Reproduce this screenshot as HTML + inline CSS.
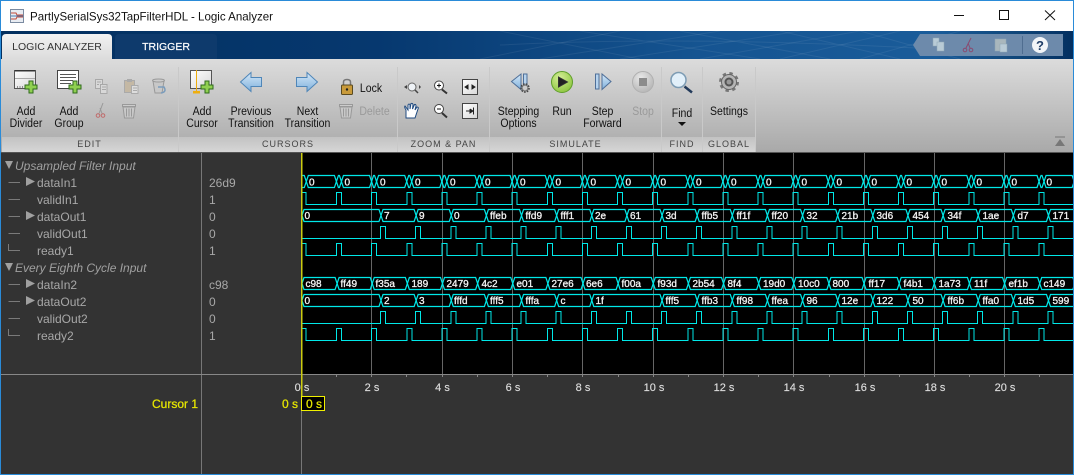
<!DOCTYPE html>
<html><head><meta charset="utf-8"><title>PartlySerialSys32TapFilterHDL - Logic Analyzer</title>
<style>
html,body{margin:0;padding:0;background:#333;width:1074px;height:475px;overflow:hidden}
svg{display:block;font-family:"Liberation Sans",Arial,sans-serif}
.b{font-size:12px;fill:#111;text-anchor:middle;transform-box:fill-box;transform-origin:center;transform:scaleX(.875)}
.g{fill:#9a9a9a}
.s{font-size:9px;fill:#444;letter-spacing:1px;text-anchor:middle}
.n{font-size:12px;fill:#a8a8a8}
.i{font-size:12px;fill:#a0a0a0;font-style:italic}
.w{fill:none;stroke:#00e8e8;stroke-width:1.2}
.p{fill:none;stroke:#00e8e8;stroke-width:1;shape-rendering:crispEdges}
.v{font-size:10px;fill:#f5f5f5;stroke:#f5f5f5;stroke-width:.3}
.t{font-size:11px;fill:#ddd;text-anchor:middle;stroke:#ddd;stroke-width:.15}
.y{font-size:12px;fill:#e6e600;stroke:#e6e600;stroke-width:.25}
</style></head><body>
<svg width="1074" height="475" viewBox="0 0 1074 475" xmlns="http://www.w3.org/2000/svg">
<defs>
<linearGradient id="hd" x1="0" x2="1" y1="0" y2="0"><stop offset="0" stop-color="#03305f"/><stop offset=".35" stop-color="#06386f"/><stop offset=".65" stop-color="#155491"/><stop offset=".87" stop-color="#1a5c9a"/><stop offset=".95" stop-color="#0f4578"/><stop offset="1" stop-color="#032f60"/></linearGradient>
<linearGradient id="rb" x1="0" x2="0" y1="0" y2="1"><stop offset="0" stop-color="#dcdcdc"/><stop offset="1" stop-color="#a9a9a9"/></linearGradient>
<linearGradient id="st" x1="0" x2="0" y1="0" y2="1"><stop offset="0" stop-color="#c2c2c2"/><stop offset="1" stop-color="#d6d6d6"/></linearGradient>
<linearGradient id="tb" x1="0" x2="0" y1="0" y2="1"><stop offset="0" stop-color="#f2f2f2"/><stop offset="1" stop-color="#dcdcdc"/></linearGradient>
<linearGradient id="ar" x1="0" x2="0" y1="0" y2="1"><stop offset="0" stop-color="#d5e8f8"/><stop offset="1" stop-color="#7fb0dc"/></linearGradient>
<radialGradient id="gr" cx=".4" cy=".3" r=".8"><stop offset="0" stop-color="#d5ee96"/><stop offset="1" stop-color="#86c238"/></radialGradient>
<radialGradient id="gy" cx=".4" cy=".3" r=".8"><stop offset="0" stop-color="#e8e8e8"/><stop offset="1" stop-color="#b0b0b0"/></radialGradient>
<linearGradient id="bx" x1="0" x2="1" y1="0" y2="1"><stop offset="0" stop-color="#fff"/><stop offset="1" stop-color="#d8d8d8"/></linearGradient>
</defs>

<!-- window -->
<rect width="1074" height="475" fill="#333"/>
<rect x="0" y="0" width="1074" height="31" fill="#fff"/>
<rect x="0" y="31" width="1074" height="28" fill="url(#hd)"/>
<g stroke="#fff" stroke-opacity=".07" fill="none">
<path d="M480 59L620 31M540 59L720 31M620 59L800 31M700 59L860 31M780 59L900 31M860 59L960 31"/>
<path d="M500 31L640 59M580 31L760 59M680 31L830 59M780 31L900 59M860 31L960 59M500 45Q700 35 950 50"/>
</g>
<rect x="0" y="59" width="1074" height="93" fill="url(#rb)"/>
<rect x="0" y="152" width="1074" height="1" fill="#555"/>
<text x="30" y="20.5" font-size="12" fill="#111" textLength="243" lengthAdjust="spacingAndGlyphs">PartlySerialSys32TapFilterHDL - Logic Analyzer</text>
<!-- title icon -->
<rect x="10.5" y="9.5" width="13" height="13" fill="#e8ecf2" stroke="#7a8aa0"/>
<path d="M11 13H16L18 17H23M11 19H16L18 15H23" fill="none" stroke="#c04a3a" stroke-width="1"/>
<path d="M11 16H23" stroke="#4a7ab0"/>
<!-- window buttons -->
<path d="M954 15.5H964" stroke="#111"/>
<rect x="999.5" y="10.5" width="9" height="9" fill="none" stroke="#111"/>
<path d="M1045 10.5L1055 20M1055 10.5L1045 20" stroke="#111" fill="none"/>
<!-- tabs -->
<path d="M2 59V38Q2 34 6 34H108Q112 34 112 38V59Z" fill="url(#tb)"/>
<text x="57" y="50" text-anchor="middle" font-size="10.5" fill="#333">LOGIC ANALYZER</text>
<path d="M115 59V38Q115 34 119 34H213Q217 34 217 38V59Z" fill="#0e3a6c"/>
<text x="166" y="50" text-anchor="middle" font-size="10.5" fill="#fff" stroke="#fff" stroke-width=".2">TRIGGER</text>
<!-- quick access -->
<path d="M913 45L920 34H1063V56H920Z" fill="#6d8aab"/>
<path d="M1022.5 36V54" stroke="#4f6d90"/>
<g fill="#b9cbd6" stroke="#8fa6b4" stroke-width=".5"><rect x="933" y="38" width="6" height="8"/><rect x="937" y="42" width="7" height="9"/></g>
<g fill="none" stroke="#8a4a70"><circle cx="965" cy="50" r="1.8"/><circle cx="971" cy="50" r="1.8"/><path d="M966 48L971 38M970 48L968 43"/></g>
<g fill="#b9cbd6" stroke="#8fa6b4" stroke-width=".5"><rect x="995" y="39" width="11" height="12" fill="#a9b7bd"/><rect x="1000" y="44" width="7" height="8"/></g>
<circle cx="1040" cy="45" r="8" fill="#f2f5f8"/>
<text x="1040" y="50" text-anchor="middle" font-size="13" font-weight="bold" fill="#1f3e68">?</text>
<!-- section strips -->
<rect x="2" y="137" width="753" height="15" fill="url(#st)"/>
<g stroke="#c9c9c9" fill="none"><path d="M178.5 67V152M397.5 67V152M489.5 67V152M661.5 67V152M702.5 67V152M755.5 67V152"/></g>
<text class="s" x="89.500" y="147">EDIT</text>
<text class="s" x="288" y="147">CURSORS</text>
<text class="s" x="443.500" y="147">ZOOM &amp; PAN</text>
<text class="s" x="575.500" y="147">SIMULATE</text>
<text class="s" x="682" y="147">FIND</text>
<text class="s" x="729" y="147">GLOBAL</text>
<!-- collapse -->
<path d="M1055 137H1065" stroke="#777"/><path d="M1055 146L1060 139L1065 146Z" fill="#777"/>

<!-- button labels -->
<text class="b" x="26" y="115">Add</text><text class="b" x="26" y="127">Divider</text>
<text class="b" x="69" y="115">Add</text><text class="b" x="69" y="127">Group</text>
<text class="b" x="202" y="115">Add</text><text class="b" x="202" y="127">Cursor</text>
<text class="b" x="251" y="115">Previous</text><text class="b" x="251" y="127">Transition</text>
<text class="b" x="307.500" y="115">Next</text><text class="b" x="307.500" y="127">Transition</text>
<text class="b" x="371" y="92">Lock</text><text class="b g" x="374.500" y="115">Delete</text>
<text class="b" x="518.500" y="115">Stepping</text><text class="b" x="518.500" y="127">Options</text>
<text class="b" x="562" y="115">Run</text>
<text class="b" x="602.500" y="115">Step</text><text class="b" x="602.500" y="127">Forward</text>
<text class="b g" x="643" y="115">Stop</text>
<text class="b" x="682" y="117">Find</text>
<text class="b" x="729" y="115">Settings</text>
<path d="M678 122H686L682 126Z" fill="#111"/>

<!-- Add Divider -->
<rect x="14.500" y="70.500" width="21" height="18" fill="url(#bx)" stroke="#555"/>
<path d="M15 78.500H35" stroke="#aaa"/><rect x="15" y="70" width="20" height="1.500" fill="#333"/>
<path d="M17 87H28" stroke="#333" stroke-dasharray="1 1.500"/>
<path d="M29 81h4v4h4v4h-4v4h-4v-4h-4v-4h4z" fill="#8fd050" stroke="#2f6a1c"/>
<!-- Add Group -->
<rect x="57.500" y="70.500" width="21" height="18" fill="#fff" stroke="#444"/>
<path d="M60 74.500H76M60 77.500H76M60 80.500H73M60 83.500H71" stroke="#555"/>
<path d="M73 81h4v4h4v4h-4v4h-4v-4h-4v-4h4z" fill="#8fd050" stroke="#2f6a1c"/>
<!-- copy -->
<g fill="#d8d8d8" stroke="#a8a8a8"><rect x="95.500" y="79.500" width="7" height="9"/><rect x="100.500" y="84.500" width="6.500" height="9"/></g>
<path d="M97 82H101M97 84.500H99M102 87H106M102 89.500H106" stroke="#a8a8a8"/>
<!-- paste -->
<rect x="124.500" y="80.500" width="10" height="12" fill="#c4b8a4" stroke="#aaa"/><rect x="127" y="79" width="5" height="3" fill="#aaa"/><rect x="131.500" y="85.500" width="6.500" height="8" fill="#ddd" stroke="#aaa"/>
<path d="M133 88H137M133 90.500H137" stroke="#aaa"/>
<!-- undo -->
<path d="M153 81H164L162 93H155Z" fill="#c8c8c8" stroke="#999"/><ellipse cx="158.500" cy="80.500" rx="6" ry="1.500" fill="#ccc" stroke="#999"/>
<path d="M158 87H164Q167 92 161 93" fill="none" stroke="#7a9cbc" stroke-width="1.500"/>
<!-- scissors -->
<g fill="none" stroke="#c06a6a"><circle cx="98" cy="115.500" r="1.800"/><circle cx="103" cy="115.500" r="1.800"/><path d="M99 113.500L103 103" stroke="#999"/><path d="M102 113.500L100 108" stroke="#999"/></g>
<!-- trash -->
<path d="M123 107H135L133.500 118H124.500Z" fill="#c8c8c8" stroke="#999"/><rect x="122.500" y="104.500" width="13" height="2" fill="#ccc" stroke="#999"/><path d="M126.500 108.500V116.500M129 108.500V116.500M131.500 108.500V116.500" stroke="#999"/>
<path d="M340 107H352L350.500 118H341.500Z" fill="#c8c8c8" stroke="#999"/><rect x="339.500" y="104.500" width="13" height="2" fill="#ccc" stroke="#999"/><path d="M343.500 108.500V116.500M346 108.500V116.500M348.500 108.500V116.500" stroke="#999"/>
<!-- Add Cursor -->
<rect x="190.500" y="70.500" width="21" height="18" fill="url(#bx)" stroke="#555"/>
<path d="M196.500 70V92" stroke="#eeae10"/><rect x="193" y="91" width="7" height="2.500" fill="#eeae10"/>
<path d="M205 81h4v4h4v4h-4v4h-4v-4h-4v-4h4z" fill="#8fd050" stroke="#2f6a1c"/>
<!-- Prev / Next -->
<path d="M240.500 82L251 72.500V77.500H261.500V86.500H251V91.500Z" fill="url(#ar)" stroke="#4f86b8"/>
<path d="M317.500 82L307 72.500V77.500H296.500V86.500H307V91.500Z" fill="url(#ar)" stroke="#4f86b8"/>
<!-- Lock -->
<path d="M343.500 85V82Q343.500 79.500 347 79.500Q350.500 79.500 350.500 82V85" fill="none" stroke="#777" stroke-width="1.500"/>
<rect x="341.500" y="85" width="11" height="9.500" rx="1" fill="#c89a3a" stroke="#5a4a20"/><circle cx="347" cy="89.500" r="1.200" fill="#222"/>
<!-- zoom pan -->
<circle cx="412" cy="87" r="4" fill="#eef2f6" stroke="#666"/><path d="M415 90L418 93" stroke="#444" stroke-width="1.500"/><path d="M404 87L407 85V89ZM421 87L419 85V89Z" fill="#444"/>
<circle cx="439" cy="85.500" r="4.500" fill="#fff" stroke="#444"/><path d="M442 89.500L447 93.500" stroke="#333" stroke-width="2"/><path d="M437 85.500H441M439 83.500V87.500" stroke="#111"/>
<circle cx="439" cy="109" r="4.500" fill="#fff" stroke="#444"/><path d="M442 113L447 117.500" stroke="#333" stroke-width="2"/><path d="M437 109H441" stroke="#111"/>
<rect x="462.500" y="79.500" width="15" height="15" fill="url(#bx)" stroke="#444"/><path d="M465 87L468 85V89ZM475 87L472 85V89Z" fill="#222" stroke="#222"/>
<rect x="462.500" y="103.500" width="15" height="15" fill="url(#bx)" stroke="#444"/><path d="M466 111H470M470 109V113L473 111L470 109M473.500 107.500V114.500" fill="#222" stroke="#222"/>
<path d="M406 118V110Q404 107 405 106L408 110V105Q409 103 410 105V109L411 103.500Q412.500 103 413 104.500L412.500 109L414.500 104.500Q416 104 416 106L415 110L417 107Q419 107 418 109L415 118Z" fill="#fff" stroke="#1f4a80" stroke-width="1"/>
<!-- stepping options -->
<path d="M511.500 81.500L521 74V89.500Z" fill="url(#ar)" stroke="#4f6f98"/><rect x="523.500" y="74" width="3.500" height="11" fill="#b6d3ee" stroke="#4f6f98"/>
<circle cx="525" cy="88" r="3.600" fill="none" stroke="#444" stroke-width="2.400" stroke-dasharray="1.500 1"/><circle cx="525" cy="88" r="3" fill="none" stroke="#777"/>
<!-- run -->
<circle cx="562" cy="82" r="10.500" fill="url(#gr)" stroke="#5f9e2a"/><path d="M558.500 77L567.500 82L558.500 87Z" fill="#222" stroke="#333"/>
<!-- step forward -->
<rect x="595.500" y="74" width="3.500" height="15" fill="#b6d3ee" stroke="#4f6f98"/><path d="M602 74V89.500L611 81.500Z" fill="url(#ar)" stroke="#4f6f98"/>
<!-- stop -->
<circle cx="643" cy="82" r="10.500" fill="url(#gy)" stroke="#b0b0b0"/><rect x="639" y="78" width="8" height="8" fill="#8c8c8c"/>
<!-- find -->
<circle cx="678.500" cy="80" r="7.500" fill="#e2f0fa" stroke="#7d9cb4" stroke-width="1.500"/><path d="M684.500 86.500L692 92.500" stroke="#223a5a" stroke-width="2.500"/>
<!-- settings -->
<circle cx="729" cy="82" r="8.500" fill="none" stroke="#777" stroke-width="3" stroke-dasharray="3.300 3.400"/>
<circle cx="729" cy="82" r="7.500" fill="#b5b5b5" stroke="#666"/><circle cx="729" cy="82" r="4.500" fill="#555"/><circle cx="729" cy="82" r="2.500" fill="#999"/>

<!-- left panel -->
<rect x="0" y="153" width="1074" height="322" fill="#333"/>
<rect x="302" y="153" width="772" height="221" fill="#000"/>
<g stroke="#666" fill="none"><path d="M371.500 153V374M442.500 153V374M512.500 153V374M582.500 153V374M653.500 153V374M723.500 153V374M793.500 153V374M864.500 153V374M934.500 153V374M1004.500 153V374"/></g>
<path d="M201.500 153V474M301.500 374V474" stroke="#777"/>
<path d="M1 374.500H1073" stroke="#888"/>
<path d="M336.500 374V377M371.500 374V377M406.500 374V377M442.500 374V377M477.500 374V377M512.500 374V377M547.500 374V377M582.500 374V377M618.500 374V377M653.500 374V377M688.500 374V377M723.500 374V377M758.500 374V377M793.500 374V377M829.500 374V377M864.500 374V377M899.500 374V377M934.500 374V377M969.500 374V377M1004.500 374V377M1039.500 374V377" stroke="#888"/>

<!-- tree -->
<path d="M8.500 182.500H20M8.500 199.500H20M8.500 216.500H20M8.500 233.500H20M8.500 244V250.500H20M8.500 284.500H20M8.500 301.500H20M8.500 318.500H20M8.500 329V335.500H20" fill="none" stroke="#7a7a7a"/>
<path d="M5 161H13L9 169ZM5 263H13L9 271Z" fill="#a0a0a0"/>
<path d="M26 177L35 181.500L26 186ZM26 211L35 215.500L26 220ZM26 279L35 283.500L26 288ZM26 296L35 300.500L26 305Z" fill="#a0a0a0"/>
<text class="i" x="15" y="170">Upsampled Filter Input</text>
<text class="n" x="37" y="187">dataIn1</text><text class="n" x="209" y="187">26d9</text>
<text class="n" x="37" y="204">validIn1</text><text class="n" x="209" y="204">1</text>
<text class="n" x="37" y="221">dataOut1</text><text class="n" x="209" y="221">0</text>
<text class="n" x="37" y="238">validOut1</text><text class="n" x="209" y="238">0</text>
<text class="n" x="37" y="255">ready1</text><text class="n" x="209" y="255">1</text>
<text class="i" x="15" y="272">Every Eighth Cycle Input</text>
<text class="n" x="37" y="289">dataIn2</text><text class="n" x="209" y="289">c98</text>
<text class="n" x="37" y="306">dataOut2</text><text class="n" x="209" y="306">0</text>
<text class="n" x="37" y="323">validOut2</text><text class="n" x="209" y="323">0</text>
<text class="n" x="37" y="340">ready2</text><text class="n" x="209" y="340">1</text>

<!-- dataIn1 -->
<path class="w" d="M302 175.500h2.300l4 12h26.130l4-12h1l4 12h26.130l4-12h1l4 12h26.130l4-12h1l4 12h26.130l4-12h1l4 12h26.130l4-12h1l4 12h26.130l4-12h1l4 12h26.130l4-12h1l4 12h26.130l4-12h1l4 12h26.130l4-12h1l4 12h26.130l4-12h1l4 12h26.130l4-12h1l4 12h26.130l4-12h1l4 12h26.130l4-12h1l4 12h26.130l4-12h1l4 12h26.130l4-12h1l4 12h26.130l4-12h1l4 12h26.130l4-12h1l4 12h26.130l4-12h1l4 12h26.130l4-12h1l4 12h26.130l4-12h1l4 12h26.130l4-12h1l4 12h26.130l4-12h1l4 12"/>
<path class="w" d="M302 187.500h2.300l4-12h26.130l4 12h1l4-12h26.130l4 12h1l4-12h26.130l4 12h1l4-12h26.130l4 12h1l4-12h26.130l4 12h1l4-12h26.130l4 12h1l4-12h26.130l4 12h1l4-12h26.130l4 12h1l4-12h26.130l4 12h1l4-12h26.130l4 12h1l4-12h26.130l4 12h1l4-12h26.130l4 12h1l4-12h26.130l4 12h1l4-12h26.130l4 12h1l4-12h26.130l4 12h1l4-12h26.130l4 12h1l4-12h26.130l4 12h1l4-12h26.130l4 12h1l4-12h26.130l4 12h1l4-12h26.130l4 12h1l4-12h26.130l4 12h1l4-12h26.130l4 12h1l4-12"/>
<g class="v">
<text x="309" y="185.500">0</text><text x="344.500" y="185.500">0</text><text x="380" y="185.500">0</text><text x="415" y="185.500">0</text><text x="450" y="185.500">0</text><text x="485" y="185.500">0</text><text x="520" y="185.500">0</text><text x="555.500" y="185.500">0</text><text x="590.500" y="185.500">0</text><text x="625.500" y="185.500">0</text><text x="660.500" y="185.500">0</text><text x="696" y="185.500">0</text><text x="731" y="185.500">0</text><text x="766" y="185.500">0</text><text x="801.500" y="185.500">0</text><text x="836.500" y="185.500">0</text><text x="871.500" y="185.500">0</text><text x="906.500" y="185.500">0</text><text x="941.500" y="185.500">0</text><text x="976.500" y="185.500">0</text><text x="1011.500" y="185.500">0</text><text x="1046.500" y="185.500">0</text>
</g>

<!-- pulses validIn1 / ready1 / ready2 -->
<path class="p" d="M302 192.500h3.800v12h30.700v-12h5v12h30.130v-12h5v12h30.130v-12h5v12h30.130v-12h5v12h30.130v-12h5v12h30.130v-12h5v12h30.130v-12h5v12h30.130v-12h5v12h30.130v-12h5v12h30.130v-12h5v12h30.130v-12h5v12h30.130v-12h5v12h30.130v-12h5v12h30.130v-12h5v12h30.130v-12h5v12h30.130v-12h5v12h30.130v-12h5v12h30.130v-12h5v12h30.130v-12h5v12h30.130v-12h5v12h30.130v-12h5v12h30.130"/>
<path class="p" d="M302 243.500h3.800v12h30.700v-12h5v12h30.130v-12h5v12h30.130v-12h5v12h30.130v-12h5v12h30.130v-12h5v12h30.130v-12h5v12h30.130v-12h5v12h30.130v-12h5v12h30.130v-12h5v12h30.130v-12h5v12h30.130v-12h5v12h30.130v-12h5v12h30.130v-12h5v12h30.130v-12h5v12h30.130v-12h5v12h30.130v-12h5v12h30.130v-12h5v12h30.130v-12h5v12h30.130v-12h5v12h30.130v-12h5v12h30.130v-12h5v12h30.130"/>
<path class="p" d="M302 328.500h3.800v12h30.700v-12h5v12h30.130v-12h5v12h30.130v-12h5v12h30.130v-12h5v12h30.130v-12h5v12h30.130v-12h5v12h30.130v-12h5v12h30.130v-12h5v12h30.130v-12h5v12h30.130v-12h5v12h30.130v-12h5v12h30.130v-12h5v12h30.130v-12h5v12h30.130v-12h5v12h30.130v-12h5v12h30.130v-12h5v12h30.130v-12h5v12h30.130v-12h5v12h30.130v-12h5v12h30.130v-12h5v12h30.130v-12h5v12h30.130"/>
<!-- validOut -->
<path class="p" d="M302 238.500H380.500v-12h5v12h30.130v-12h5v12h30.130v-12h5v12h30.130v-12h5v12h30.130v-12h5v12h30.130v-12h5v12h30.130v-12h5v12h30.130v-12h5v12h30.130v-12h5v12h30.130v-12h5v12h30.130v-12h5v12h30.130v-12h5v12h30.130v-12h5v12h30.130v-12h5v12h30.130v-12h5v12h30.130v-12h5v12h30.130v-12h5v12h30.130v-12h5v12h30.130v-12h5v12h30.130v-12h5v12h30.130v-12h5v12h30.130v-12h5v12h30.130"/>
<path class="p" d="M302 323.500H380.500v-12h5v12h30.130v-12h5v12h30.130v-12h5v12h30.130v-12h5v12h30.130v-12h5v12h30.130v-12h5v12h30.130v-12h5v12h30.130v-12h5v12h30.130v-12h5v12h30.130v-12h5v12h30.130v-12h5v12h30.130v-12h5v12h30.130v-12h5v12h30.130v-12h5v12h30.130v-12h5v12h30.130v-12h5v12h30.130v-12h5v12h30.130v-12h5v12h30.130v-12h5v12h30.130v-12h5v12h30.130v-12h5v12h30.130"/>

<!-- dataOut1 -->
<path class="w" d="M302 215.500l2-6h75l4 12h31.130l4-12h31.130l4 12h31.130l4-12h31.130l4 12h31.130l4-12h31.130l4 12h31.130l4-12h31.130l4 12h31.130l4-12h31.130l4 12h31.130l4-12h31.130l4 12h31.130l4-12h31.130l4 12h31.130l4-12h31.130l4 12h31.130l4-12h31.130l4 12h31.130l4-12h31.130l4 12h31.130l4-12h31.130l4 12h31.130l4-12"/>
<path class="w" d="M302 215.500l2 6h75l4-12h31.130l4 12h31.130l4-12h31.130l4 12h31.130l4-12h31.130l4 12h31.130l4-12h31.130l4 12h31.130l4-12h31.130l4 12h31.130l4-12h31.130l4 12h31.130l4-12h31.130l4 12h31.130l4-12h31.130l4 12h31.130l4-12h31.130l4 12h31.130l4-12h31.130l4 12h31.130l4-12h31.130l4 12h31.130l4-12h31.130l4 12"/>
<g class="v">
<text x="304.500" y="219">0</text><text x="384" y="219">7</text><text x="419" y="219">9</text><text x="454" y="219">0</text><text x="490" y="219">ffeb</text><text x="525.500" y="219">ffd9</text><text x="560.500" y="219">fff1</text><text x="595" y="219">2e</text><text x="630" y="219">61</text><text x="665.500" y="219">3d</text><text x="701.500" y="219">ffb5</text><text x="736.500" y="219">ff1f</text><text x="771.500" y="219">ff20</text><text x="806.500" y="219">32</text><text x="841.500" y="219">21b</text><text x="876.500" y="219">3d6</text><text x="912.500" y="219">454</text><text x="947.500" y="219">34f</text><text x="982.500" y="219">1ae</text><text x="1017.500" y="219">d7</text><text x="1052.500" y="219">171</text>
</g>

<!-- dataIn2 -->
<path class="w" d="M302 283.500l2-6h31.100l4 12h31.130l4-12h31.130l4 12h31.130l4-12h31.130l4 12h31.130l4-12h31.130l4 12h31.130l4-12h31.130l4 12h31.130l4-12h31.130l4 12h31.130l4-12h31.130l4 12h31.130l4-12h31.130l4 12h31.130l4-12h31.130l4 12h31.130l4-12h31.130l4 12h31.130l4-12h31.130l4 12h31.130l4-12h31.130l4 12h31.130l4-12"/>
<path class="w" d="M302 283.500l2 6h31.100l4-12h31.130l4 12h31.130l4-12h31.130l4 12h31.130l4-12h31.130l4 12h31.130l4-12h31.130l4 12h31.130l4-12h31.130l4 12h31.130l4-12h31.130l4 12h31.130l4-12h31.130l4 12h31.130l4-12h31.130l4 12h31.130l4-12h31.130l4 12h31.130l4-12h31.130l4 12h31.130l4-12h31.130l4 12h31.130l4-12h31.130l4 12"/>
<g class="v">
<text x="305.500" y="287">c98</text><text x="340.500" y="287">ff49</text><text x="375.500" y="287">f35a</text><text x="411.500" y="287">189</text><text x="446.500" y="287">2479</text><text x="481.500" y="287">4c2</text><text x="516.500" y="287">e01</text><text x="551.500" y="287">27e6</text><text x="586" y="287">6e6</text><text x="621.500" y="287">f00a</text><text x="657.500" y="287">f93d</text><text x="692.500" y="287">2b54</text><text x="727.500" y="287">8f4</text><text x="763" y="287">19d0</text><text x="798" y="287">10c0</text><text x="832.500" y="287">800</text><text x="868.500" y="287">ff17</text><text x="903.500" y="287">f4b1</text><text x="938.500" y="287">1a73</text><text x="974" y="287">11f</text><text x="1008.500" y="287">ef1b</text><text x="1043.500" y="287">c149</text>
</g>

<!-- dataOut2 -->
<path class="w" d="M302 300.500l2-6h75l4 12h31.130l4-12h31.130l4 12h31.130l4-12h31.130l4 12h31.130l4-12h31.130l4 12h66.260l4-12h31.130l4 12h31.130l4-12h31.130l4 12h31.130l4-12h31.130l4 12h31.130l4-12h31.130l4 12h31.130l4-12h31.130l4 12h31.130l4-12h31.130l4 12h31.130l4-12h31.130l4 12"/>
<path class="w" d="M302 300.500l2 6h75l4-12h31.130l4 12h31.130l4-12h31.130l4 12h31.130l4-12h31.130l4 12h31.130l4-12h66.260l4 12h31.130l4-12h31.130l4 12h31.130l4-12h31.130l4 12h31.130l4-12h31.130l4 12h31.130l4-12h31.130l4 12h31.130l4-12h31.130l4 12h31.130l4-12h31.130l4 12h31.130l4-12"/>
<g class="v">
<text x="304.500" y="304">0</text><text x="384" y="304">2</text><text x="419" y="304">3</text><text x="454" y="304">fffd</text><text x="490" y="304">fff5</text><text x="525.500" y="304">fffa</text><text x="560.500" y="304">c</text><text x="595.500" y="304">1f</text><text x="665.500" y="304">fff5</text><text x="701.500" y="304">ffb3</text><text x="736.500" y="304">ff98</text><text x="771.500" y="304">ffea</text><text x="806.500" y="304">96</text><text x="841.500" y="304">12e</text><text x="876.500" y="304">122</text><text x="912.500" y="304">50</text><text x="947.500" y="304">ff6b</text><text x="982.500" y="304">ffa0</text><text x="1017.500" y="304">1d5</text><text x="1052.500" y="304">599</text>
</g>

<!-- cursor -->
<rect x="301" y="153" width="1.500" height="243" fill="#cccc10"/>
<!-- axis labels -->
<text class="t" x="302" y="391">0 s</text><text class="t" x="372" y="391">2 s</text><text class="t" x="442.500" y="391">4 s</text><text class="t" x="513" y="391">6 s</text><text class="t" x="583" y="391">8 s</text><text class="t" x="654" y="391">10 s</text><text class="t" x="724" y="391">12 s</text><text class="t" x="794" y="391">14 s</text><text class="t" x="865" y="391">16 s</text><text class="t" x="935" y="391">18 s</text><text class="t" x="1005" y="391">20 s</text>
<text class="y" x="152" y="408">Cursor 1</text>
<text class="y" x="282" y="408">0 s</text>
<rect x="301.500" y="396.500" width="23" height="14" fill="#000" stroke="#f0f000"/>
<text class="y" x="306" y="408">0 s</text>

<!-- window border -->
<rect x="0.500" y="0.500" width="1073" height="474" fill="none" stroke="#2a8bd8"/>
</svg>
</body></html>
